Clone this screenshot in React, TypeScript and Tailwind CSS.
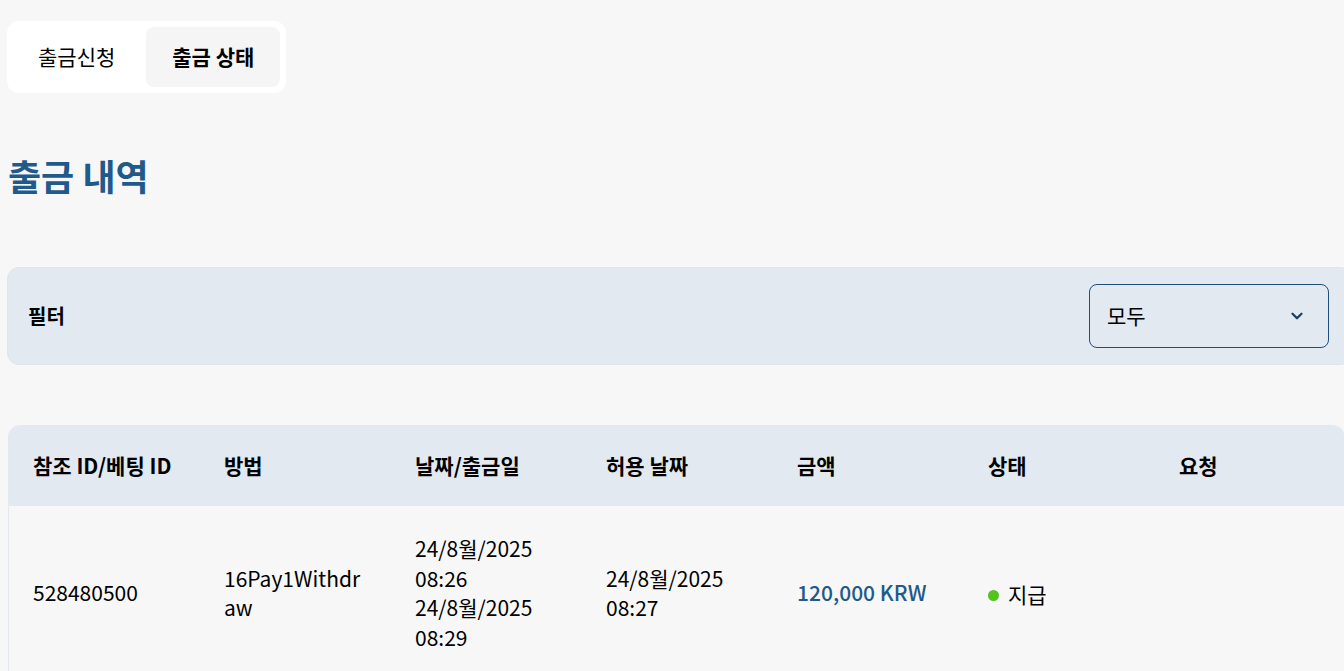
import { ChevronDown } from "lucide-react";

const font = { fontFamily: '"Noto Sans CJK KR", "Noto Sans", sans-serif' };

const columns = ["참조 ID/베팅 ID", "방법", "날짜/출금일", "허용 날짜", "금액", "상태", "요청"];

export default function App() {
  return (
    <div className="min-h-screen bg-[#f7f7f7] text-black overflow-hidden" style={font}>
      <div className="pl-[7px] pt-[21px] w-[1352px]">
        {/* tabs */}
        <div className="inline-flex gap-[6px] p-[6px] bg-white rounded-xl">
          <button className="h-[60px] px-[25px] rounded-lg text-[21px] text-black">출금신청</button>
          <button className="h-[60px] px-[26px] rounded-lg bg-[#f5f5f5] text-[21px] font-bold text-black">
            출금 상태
          </button>
        </div>

        <h1 className="mt-[56px] ml-px text-[36px] leading-[52px] font-bold text-[#1f5a8a]">출금 내역</h1>

        {/* filter */}
        <div className="mt-[66px] h-[98px] flex items-center justify-between pl-5 pr-[22px] bg-[#e2e9f1] border border-[#dde5ee] rounded-xl">
          <span className="text-[20px] font-bold">필터</span>
          <div className="w-[240px] h-[64px] flex items-center justify-between pl-[17px] pr-[22px] border border-[#1f4e79] rounded-lg">
            <span className="text-[21px]">모두</span>
            <ChevronDown size={18} strokeWidth={3} className="text-[#1f3f5f]" />
          </div>
        </div>

        {/* table */}
        <div className="mt-[60px] w-[1337px] ml-px border border-[#e3e8ee] rounded-t-xl overflow-hidden">
          <div className="grid grid-cols-[repeat(7,191px)] h-[80px] items-center bg-[#e2e9f1]">
            {columns.map((c) => (
              <div key={c} className="pl-6 text-[21px] font-bold">
                {c}
              </div>
            ))}
          </div>
          <div className="grid grid-cols-[repeat(7,191px)] items-center pt-[28px] pb-[30px] text-[21px] leading-[29.5px]">
            <div className="pl-6">528480500</div>
            <div className="pl-6 pr-[26px] break-all">16Pay1Withdraw</div>
            <div className="pl-6 pr-6">
              <div>24/8월/2025</div>
              <div>08:26</div>
              <div>24/8월/2025</div>
              <div>08:29</div>
            </div>
            <div className="pl-6 pr-6">
              <div>24/8월/2025</div>
              <div>08:27</div>
            </div>
            <div className="pl-6 font-medium text-[#1f5a8a]">120,000 KRW</div>
            <div className="pl-6 flex items-center gap-[9px] pt-1">
              <span className="w-[11px] h-[11px] rounded-full bg-[#52c41a]" />
              <span>지급</span>
            </div>
            <div />
          </div>
        </div>
      </div>
    </div>
  );
}
